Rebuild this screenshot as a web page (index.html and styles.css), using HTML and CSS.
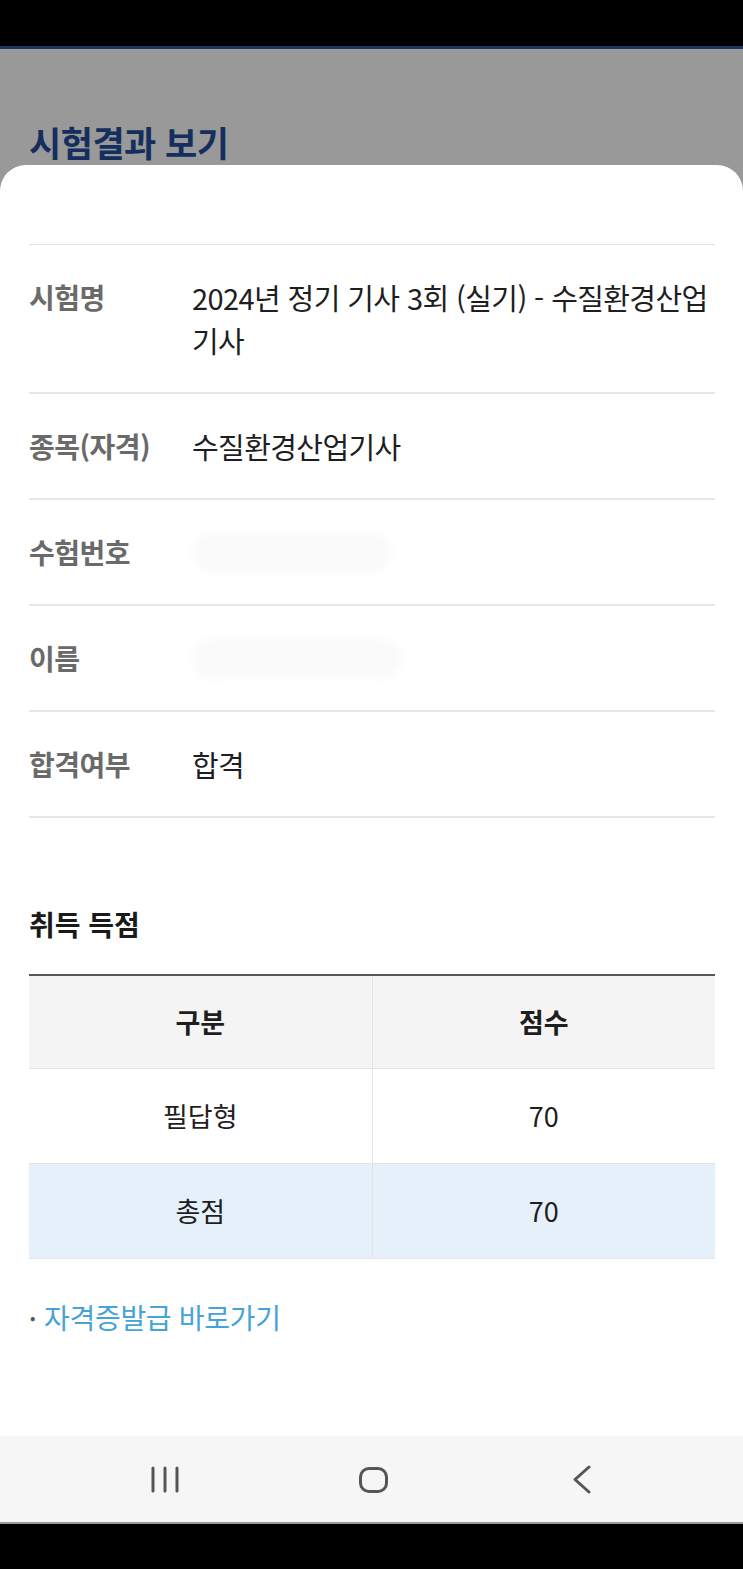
FILE: index.html
```html
<!DOCTYPE html>
<html lang="ko">
<head>
<meta charset="utf-8">
<link rel="stylesheet" href="styles.css">
</head>
<body>
<div class="phone">
  <div class="statusbar"></div>
  <div class="backdrop">
    <h1 class="page-title">시험결과 보기</h1>
  </div>
  <div class="sheet">
    <dl class="info">
      <div class="info-row">
        <dt>시험명</dt>
        <dd>2024년 정기 기사 3회 (실기) - 수질환경산업기사</dd>
      </div>
      <div class="info-row">
        <dt>종목(자격)</dt>
        <dd>수질환경산업기사</dd>
      </div>
      <div class="info-row">
        <dt>수험번호</dt>
        <dd><span class="blur blur-a"></span></dd>
      </div>
      <div class="info-row">
        <dt>이름</dt>
        <dd><span class="blur blur-b"></span></dd>
      </div>
      <div class="info-row">
        <dt>합격여부</dt>
        <dd>합격</dd>
      </div>
    </dl>

    <h2 class="section-title">취득 득점</h2>
    <table class="score">
      <thead>
        <tr><th>구분</th><th>점수</th></tr>
      </thead>
      <tbody>
        <tr><td>필답형</td><td>70</td></tr>
        <tr class="total"><td>총점</td><td>70</td></tr>
      </tbody>
    </table>

    <p class="link-line"><span class="dot">•</span><a class="link" href="#">자격증발급 바로가기</a></p>
  </div>
  <div class="navbar">
    <svg class="nav-icon" width="40" height="32" viewBox="0 0 40 32"><g stroke="#555" stroke-width="3" stroke-linecap="round"><line x1="8" y1="5" x2="8" y2="28"/><line x1="20" y1="5" x2="20" y2="28"/><line x1="32" y1="5" x2="32" y2="28"/></g></svg>
    <svg class="nav-icon" width="40" height="32" viewBox="0 0 40 32"><rect x="7.5" y="5.5" width="26" height="23" rx="8.5" fill="none" stroke="#555" stroke-width="3"/></svg>
    <svg class="nav-icon" width="40" height="32" viewBox="0 0 40 32"><polyline points="28,4 14,16.5 28,29" fill="none" stroke="#555" stroke-width="3" stroke-linecap="round" stroke-linejoin="round"/></svg>
  </div>
  <div class="bottom-black"></div>
</div>
</body>
</html>
```

FILE: styles.css
```css
* { box-sizing: border-box; }
html, body { margin: 0; padding: 0; }
body {
  font-family: "Noto Sans CJK KR", "Noto Sans", sans-serif;
  background: #000;
}
.phone {
  width: 743px;
  height: 1569px;
  display: flex;
  flex-direction: column;
  background: #999;
}
.statusbar {
  height: 49px;
  background: #000;
  border-bottom: 3px solid #1d3563;
}
.backdrop {
  height: 116px;
  background: #999999;
  padding: 70px 0 0 29px;
}
.page-title {
  margin: 0;
  font-size: 35px;
  line-height: 46px;
  font-weight: 700;
  color: #142f5e;
  letter-spacing: -0.5px;
}
.sheet {
  flex: 1;
  background: #fff;
  border-radius: 26px 26px 0 0;
  padding: 79px 28px 0 29px;
}
.info {
  margin: 0;
  border-top: 1px solid #e3e3e3;
}
.info-row {
  display: flex;
  padding: 31px 0 30px;
  border-bottom: 2px solid #e6e6e6;
}
.info-row dt {
  width: 163px;
  flex: none;
  font-size: 28px;
  line-height: 43px;
  font-weight: 600;
  color: #6a6a6a;
  letter-spacing: -0.5px;
}
.info-row dd {
  margin: 0;
  flex: 1;
  min-height: 43px;
  font-size: 29px;
  line-height: 43px;
  color: #1e1e1e;
  letter-spacing: -0.6px;
  display: flex;
  align-items: center;
}
.blur {
  display: block;
  height: 40px;
  border-radius: 20px;
  background: #fafafa;
  filter: blur(4px);
}
.blur-a { width: 200px; }
.blur-b { width: 210px; }
.section-title {
  margin: 88px 0 32px;
  font-size: 28px;
  line-height: 36px;
  font-weight: 700;
  color: #1a1a1a;
}
.score {
  width: 100%;
  border-collapse: collapse;
  table-layout: fixed;
  border-top: 2px solid #555;
}
.score th, .score td {
  width: 50%;
  text-align: center;
  font-size: 27px;
  color: #1e1e1e;
  border-bottom: 1px solid #e4e4e4;
}
.score th + th, .score td + td {
  border-left: 1px solid #e4e4e4;
}
.score th {
  height: 93px;
  background: #f4f4f4;
  font-weight: 700;
}
.score td {
  height: 95px;
  font-weight: 400;
}
.score tr.total td {
  background: #e6f0fb;
}
.link-line {
  margin: 40px 0 0;
  font-size: 28px;
  line-height: 36px;
  display: flex;
  align-items: center;
}
.dot {
  color: #555;
  font-size: 16px;
  width: 15px;
  padding-left: 1px;
}
.link {
  color: #46a3d6;
  text-decoration: none;
  letter-spacing: -0.3px;
}
.navbar {
  height: 86px;
  background: #f6f6f6;
  display: flex;
  align-items: center;
  gap: 168px;
  padding: 0 0 0 145px;
}
.nav-icon { display: block; flex: none; }
.bottom-black {
  height: 47px;
  background: #000;
  border-top: 2px solid #9a9a9a;
}
```
